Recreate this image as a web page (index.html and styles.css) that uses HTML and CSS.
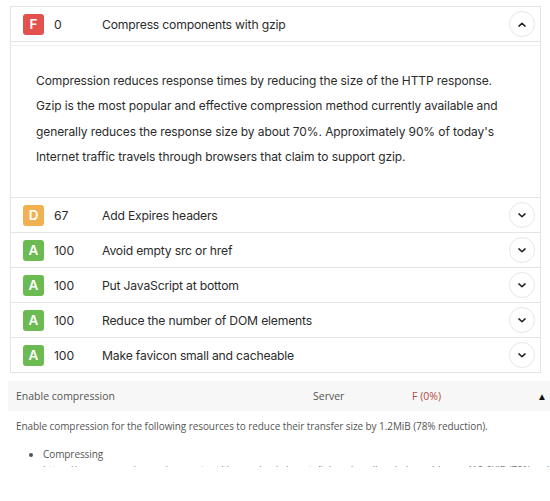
FILE: index.html
```html
<!DOCTYPE html>
<html>
<head>
<meta charset="utf-8">
<link rel="stylesheet" href="styles.css">
</head>
<body>
<div class="page">
  <div class="audits">
    <div class="audit">
      <div class="audit-head">
        <span class="badge grade-f">F</span>
        <span class="score">0</span>
        <span class="title">Compress components with gzip</span>
        <button class="toggle" aria-label="collapse">
          <svg viewBox="0 0 10 6" width="8" height="5"><path d="M1.2 5 L5 1.4 L8.8 5" fill="none" stroke="#222" stroke-width="1.9" stroke-linecap="round" stroke-linejoin="round"/></svg>
        </button>
      </div>
      <div class="audit-body">
        <p>Compression reduces response times by reducing the size of the HTTP response. Gzip is the most popular and effective compression method currently available and generally reduces the response size by about 70%. Approximately 90% of today's Internet traffic travels through browsers that claim to support gzip.</p>
      </div>
    </div>
    <div class="audit">
      <div class="audit-head">
        <span class="badge grade-d">D</span>
        <span class="score">67</span>
        <span class="title">Add Expires headers</span>
        <button class="toggle" aria-label="expand">
          <svg viewBox="0 0 10 6" width="8" height="5"><path d="M1.2 1 L5 4.6 L8.8 1" fill="none" stroke="#222" stroke-width="1.9" stroke-linecap="round" stroke-linejoin="round"/></svg>
        </button>
      </div>
    </div>
    <div class="audit">
      <div class="audit-head">
        <span class="badge grade-a">A</span>
        <span class="score">100</span>
        <span class="title">Avoid empty src or href</span>
        <button class="toggle" aria-label="expand">
          <svg viewBox="0 0 10 6" width="8" height="5"><path d="M1.2 1 L5 4.6 L8.8 1" fill="none" stroke="#222" stroke-width="1.9" stroke-linecap="round" stroke-linejoin="round"/></svg>
        </button>
      </div>
    </div>
    <div class="audit">
      <div class="audit-head">
        <span class="badge grade-a">A</span>
        <span class="score">100</span>
        <span class="title">Put JavaScript at bottom</span>
        <button class="toggle" aria-label="expand">
          <svg viewBox="0 0 10 6" width="8" height="5"><path d="M1.2 1 L5 4.6 L8.8 1" fill="none" stroke="#222" stroke-width="1.9" stroke-linecap="round" stroke-linejoin="round"/></svg>
        </button>
      </div>
    </div>
    <div class="audit">
      <div class="audit-head">
        <span class="badge grade-a">A</span>
        <span class="score">100</span>
        <span class="title">Reduce the number of DOM elements</span>
        <button class="toggle" aria-label="expand">
          <svg viewBox="0 0 10 6" width="8" height="5"><path d="M1.2 1 L5 4.6 L8.8 1" fill="none" stroke="#222" stroke-width="1.9" stroke-linecap="round" stroke-linejoin="round"/></svg>
        </button>
      </div>
    </div>
    <div class="audit">
      <div class="audit-head">
        <span class="badge grade-a">A</span>
        <span class="score">100</span>
        <span class="title">Make favicon small and cacheable</span>
        <button class="toggle" aria-label="expand">
          <svg viewBox="0 0 10 6" width="8" height="5"><path d="M1.2 1 L5 4.6 L8.8 1" fill="none" stroke="#222" stroke-width="1.9" stroke-linecap="round" stroke-linejoin="round"/></svg>
        </button>
      </div>
    </div>
  </div>

  <div class="rec">
    <div class="rec-head">
      <span class="rec-name">Enable compression</span>
      <span class="rec-type">Server</span>
      <span class="rec-grade">F (0%)</span>
      <span class="rec-toggle">&#9650;</span>
    </div>
    <div class="rec-body">
      <p>Enable compression for the following resources to reduce their transfer size by 1.2MiB (78% reduction).</p>
      <ul>
        <li>Compressing
          <div class="rec-item">https://www.example.com/wp-content/themes/main/assets/js/app.bundle.min.js could save 412.6KiB (79% reduction).</div>
        </li>
      </ul>
    </div>
  </div>
</div>
</body>
</html>
```

FILE: styles.css
```css
html, body {
  margin: 0;
  padding: 0;
  background: #ffffff;
}

.page {
  width: 550px;
  height: 501px;
  overflow: hidden;
  font-family: Inter, "Liberation Sans", sans-serif;
  color: #2b2b2b;
  padding-top: 6px;
  box-sizing: border-box;
}

.audits {
  margin-left: 10px;
  width: 531px;
  border: 1px solid #e4e4e4;
  box-sizing: border-box;
}

.audit-head {
  display: flex;
  align-items: center;
  height: 34px;
  padding: 0 5px 0 12px;
  border-bottom: 1px solid #e4e4e4;
}

.audit:last-child .audit-head {
  border-bottom: none;
}

.badge {
  width: 21px;
  height: 21px;
  border-radius: 3px;
  color: #fff;
  font-weight: 600;
  font-size: 13.5px;
  display: flex;
  align-items: center;
  justify-content: center;
  flex-shrink: 0;
}

.grade-f { background: #e2514d; }
.grade-d { background: #f1b153; }
.grade-a { background: #6cba52; }

.score {
  width: 48px;
  margin-left: 10px;
  font-size: 12.2px;
  letter-spacing: -0.1px;
  color: #2b2b2b;
}

.title {
  flex: 1;
  font-size: 12.2px;
  letter-spacing: -0.2px;
  color: #2b2b2b;
}

.toggle {
  width: 26px;
  height: 26px;
  border-radius: 50%;
  border: 1px solid #e6e6e6;
  background: #fff;
  padding: 0;
  display: flex;
  align-items: center;
  justify-content: center;
  box-sizing: border-box;
}

.audit-body {
  height: 156px;
  box-sizing: border-box;
  border-bottom: 1px solid #e4e4e4;
  padding: 26px 33px 0 25px;
  background: linear-gradient(#f1f1f1, #f1f1f1) 0 3px / 100% 1px no-repeat;
}

.audit-body p {
  margin: 0;
  font-size: 12px;
  letter-spacing: -0.1px;
  line-height: 25.3px;
  color: #2b2b2b;
}

.rec {
  margin-top: 8px;
  margin-left: 8px;
  font-family: "Open Sans", "Liberation Sans", sans-serif;
  font-size: 10px;
  letter-spacing: -0.08px;
  color: #555;
}

.rec-head {
  display: grid;
  grid-template-columns: 297px 99px 1fr auto;
  align-items: center;
  height: 30px;
  padding: 0 3px 0 8px;
  background: #f7f7f7;
  font-size: 10.5px;
  letter-spacing: 0;
}

.rec-grade {
  color: #b34a3c;
}

.rec-toggle {
  color: #111;
  font-size: 10px;
}

.rec-body {
  padding: 0 8px;
  height: 56px;
  overflow: hidden;
}

.rec-body p {
  margin: 6px 0 0;
  line-height: 18px;
}

.rec-body ul {
  margin: 11px 0 0;
  padding-left: 27px;
  line-height: 16px;
}

.rec-item {
  white-space: nowrap;
  color: #777;
}
```
